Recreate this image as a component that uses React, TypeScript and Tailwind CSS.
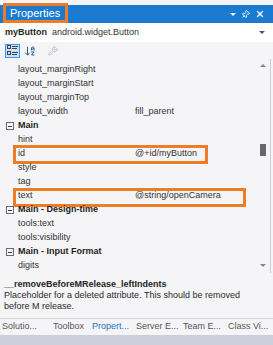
import React from 'react';
import { ArrowDownAZ, Pin, Wrench, X } from 'lucide-react';

type Row = {
    kind: 'cat' | 'prop';
    name: string;
    value?: string;
    mark?: 'id' | 'text';
};

const rows: Row[] = [
    { kind: 'prop', name: 'layout_marginRight' },
    { kind: 'prop', name: 'layout_marginStart' },
    { kind: 'prop', name: 'layout_marginTop' },
    { kind: 'prop', name: 'layout_width', value: 'fill_parent' },
    { kind: 'cat', name: 'Main' },
    { kind: 'prop', name: 'hint' },
    { kind: 'prop', name: 'id', value: '@+id/myButton', mark: 'id' },
    { kind: 'prop', name: 'style' },
    { kind: 'prop', name: 'tag' },
    { kind: 'prop', name: 'text', value: '@string/openCamera', mark: 'text' },
    { kind: 'cat', name: 'Main - Design-time' },
    { kind: 'prop', name: 'tools:text' },
    { kind: 'prop', name: 'tools:visibility' },
    { kind: 'cat', name: 'Main - Input Format' },
    { kind: 'prop', name: 'digits' },
];

const tabs = [
    { label: 'Solutio...', width: 'w-[51px]' },
    { label: 'Toolbox', width: 'w-[39px]' },
    { label: 'Propert...', width: 'w-[44px]' },
    { label: 'Server E...', width: 'w-[47px]' },
    { label: 'Team E...', width: 'w-[45px]' },
    { label: 'Class Vi...', width: 'w-[45px]' },
];

const CollapseBox = () => (
    <span className="w-[8px] h-[8px] border border-[#6d6d6d] flex items-center justify-center">
        <span className="w-[4px] h-px bg-[#3c3c3c]" />
    </span>
);

const CategorizedIcon = () => (
    <svg width="11" height="11" viewBox="0 0 11 11">
        <rect x="0.5" y="0.5" width="3" height="3" fill="none" stroke="#424242" />
        <rect x="0.5" y="6.5" width="3" height="3" fill="none" stroke="#424242" />
        <path d="M5 1.5h6M5 3.5h5M5 7.5h6M5 9.5h5" stroke="#424242" />
    </svg>
);

const App: React.FC = () => {
    return (
        <div className="w-[273px] h-[345px] overflow-hidden bg-[#f5f5f7] flex flex-col text-[#1e1e1e] font-['Liberation_Sans',Arial,sans-serif]">
            {/* Title bar */}
            <div className="h-[5px]" />
            <div className="h-[18px] bg-[#1a7bd1] flex items-center pl-[3px] pr-[8px]">
                <span className="h-[20px] -mt-[2px] border-[3px] border-[#ee7b25] px-[4px] flex items-center text-white text-[11px] w-[65px]">
                    Properties
                </span>
                <div className="ml-auto flex items-center gap-[5px] text-white">
                    <span className="w-0 h-0 border-l-[3px] border-r-[3px] border-t-[3px] border-l-transparent border-r-transparent border-t-white" />
                    <Pin className="w-[9px] h-[9px] rotate-45" strokeWidth={2.5} />
                    <X className="w-[10px] h-[10px]" strokeWidth={3} />
                </div>
            </div>

            {/* Object selector */}
            <div className="h-[19px] flex items-center pl-[5px] pr-[8px] text-[9px] bg-white">
                <span className="font-bold">myButton</span>
                <span className="ml-[5px] text-[#333]">android.widget.Button</span>
                <span className="ml-auto w-0 h-0 border-l-[3px] border-r-[3px] border-t-[3px] border-l-transparent border-r-transparent border-t-[#555]" />
            </div>

            {/* Toolbar */}
            <div className="h-[17px] flex items-center pl-[5px] gap-[4px]">
                <span className="w-[15px] h-[14px] border border-[#3399ff] bg-[#c9e0f7] flex items-center justify-center">
                    <CategorizedIcon />
                </span>
                <ArrowDownAZ className="w-[12px] h-[12px] text-[#2a5a8f]" strokeWidth={2} />
                <Wrench className="ml-[8px] w-[10px] h-[10px] text-[#b5b5b5]" strokeWidth={2} />
            </div>

            {/* Property grid */}
            <div className="h-[214px] flex pt-[4px] border-r border-[#cfcfcf] mr-[2px]">
                <div className="flex-1 flex flex-col">
                    {rows.map((row) => (
                        <div key={row.name} className="relative h-[14px] flex items-center text-[9px]">
                            {row.kind === 'cat' ? (
                                <>
                                    <span className="w-[18px] pl-[6px] flex items-center">
                                        <CollapseBox />
                                    </span>
                                    <span className="font-bold">{row.name}</span>
                                </>
                            ) : (
                                <>
                                    <span className="w-[18px]" />
                                    <span className="w-[117px] text-[#333]">{row.name}</span>
                                    {row.value && <span className="text-[#333]">{row.value}</span>}
                                </>
                            )}
                            {row.mark === 'id' && (
                                <span className="absolute left-[13px] top-[-2px] w-[195px] h-[19px] border-[3px] border-[#ee7b25]" />
                            )}
                            {row.mark === 'text' && (
                                <span className="absolute left-[13px] top-[-1px] w-[233px] h-[19px] border-[3px] border-[#ee7b25]" />
                            )}
                        </div>
                    ))}
                </div>
                {/* Scrollbar */}
                <div className="w-[14px] flex flex-col items-center pt-[1px]">
                    <span className="w-0 h-0 border-l-[3px] border-r-[3px] border-b-[3px] border-l-transparent border-r-transparent border-b-[#868686]" />
                    <div className="h-[77px]" />
                    <span className="w-[6px] h-[12px] bg-[#686868]" />
                    <div className="flex-1" />
                    <span className="mb-[6px] w-0 h-0 border-l-[3px] border-r-[3px] border-t-[3px] border-l-transparent border-r-transparent border-t-[#868686]" />
                </div>
            </div>

            {/* Description */}
            <div className="h-[45px] pl-[4px] pt-[6px] pr-[4px] text-[9px] leading-[11px]">
                <div className="font-bold">__removeBeforeMRelease_leftIndents</div>
                <div className="text-[#2a2a2a]">Placeholder for a deleted attribute. This should be removed</div>
                <div className="text-[#2a2a2a]">before M release.</div>
            </div>

            {/* Tabs */}
            <div className="h-[17px] flex items-center border-t border-[#d6d6d6] text-[9px] pl-[2px]">
                {tabs.map((tab) => (
                    <span
                        key={tab.label}
                        className={`${tab.width} ${tab.label === 'Propert...' ? 'text-[#1b72c4]' : 'text-[#555]'}`}
                    >
                        {tab.label}
                    </span>
                ))}
            </div>
            <div className="flex-1 bg-[#cccedb]" />
        </div>
    );
};

export default App;
